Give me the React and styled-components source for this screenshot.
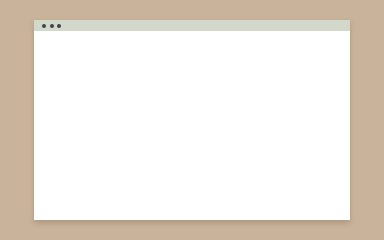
import React from "react";
import styled, { createGlobalStyle } from "styled-components";

const Global = createGlobalStyle`
  html, body { margin: 0; padding: 0; }
  body { background: #c9b39a; font-family: "Liberation Sans", Arial, sans-serif; }
`;

const Stage = styled.div`
  width: 384px;
  height: 240px;
  box-sizing: border-box;
  padding: 20px 0 0 34px;
  background: #c9b39a;
`;

const Window = styled.div`
  width: 316px;
  height: 200px;
  display: flex;
  flex-direction: column;
  background: #ffffff;
  box-shadow: 0 3px 5px rgba(90, 70, 50, 0.25);
`;

const TitleBar = styled.div`
  height: 11px;
  flex: none;
  display: flex;
  align-items: center;
  gap: 3.5px;
  padding-left: 8px;
  background: #d3d9ca;
`;

const Dot = styled.span`
  width: 4px;
  height: 4px;
  border-radius: 50%;
  background: #3f4446;
`;

const Content = styled.div`
  flex: 1;
  background: #ffffff;
`;

export default function App() {
  return (
    <>
      <Global />
      <Stage>
        <Window>
          <TitleBar>
            <Dot />
            <Dot />
            <Dot />
          </TitleBar>
          <Content />
        </Window>
      </Stage>
    </>
  );
}
